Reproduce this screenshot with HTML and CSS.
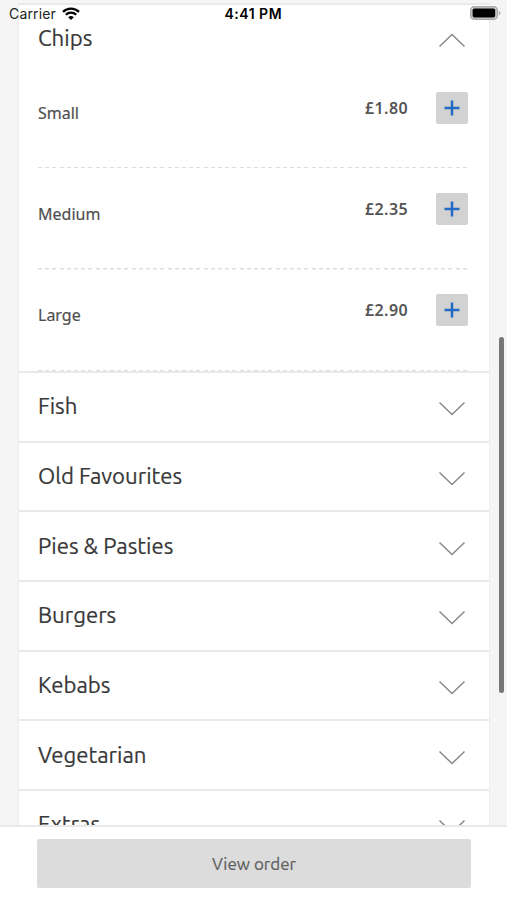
FILE: index.html
```html
<!DOCTYPE html>
<html lang="en">
<head>
<meta charset="utf-8">
<title>Menu</title>
<link rel="stylesheet" href="styles.css">
</head>
<body>
<div class="app">
  <header class="status">
    <span class="carrier">Carrier</span>
    <svg class="wifi" viewBox="0 0 18 13" width="18" height="13" fill="none" stroke="#000" stroke-width="2.3"><path d="M1 4.9a11.4 11.4 0 0 1 16 0"/><path d="M3.8 7.8a7.4 7.4 0 0 1 10.4 0"/><path d="M9 13L6.2 10.3a4 4 0 0 1 5.600 0z" fill="#000" stroke="none"/></svg>
    <span class="time">4:41 PM</span>
    <svg class="battery" viewBox="0 0 31 14" width="31" height="14"><rect x=".7" y=".7" width="26.600" height="12.600" rx="3.600" fill="#ccc" stroke="#aaa" stroke-width="1.400"/><rect x="2.600" y="2.400" width="22.600" height="9.200" rx="1.800"/><path d="M28.800 4.600q3.400 2.400 0 4.800z" fill="#aaa"/></svg>
  </header>
  <main class="content">
    <section class="card">
      <div class="group">
        <div class="heading open"><h2>Chips</h2><svg class="chevron" viewBox="0 0 28 15" width="28" height="15"><path d="M1.500 13.500L14 1.500l12.500 12"/></svg></div>
        <div class="items">
          <div class="item"><span class="name">Small</span><span class="price">£1.80</span><button class="add" aria-label="Add small"><svg viewBox="0 0 16 16" width="16" height="16"><path d="M8 .5v15M.5 8h15"/></svg></button></div>
          <div class="item"><span class="name">Medium</span><span class="price">£2.35</span><button class="add" aria-label="Add medium"><svg viewBox="0 0 16 16" width="16" height="16"><path d="M8 .5v15M.5 8h15"/></svg></button></div>
          <div class="item"><span class="name">Large</span><span class="price">£2.90</span><button class="add" aria-label="Add large"><svg viewBox="0 0 16 16" width="16" height="16"><path d="M8 .5v15M.5 8h15"/></svg></button></div>
        </div>
      </div>
      <div class="heading"><h2>Fish</h2><svg class="chevron" viewBox="0 0 28 15" width="28" height="15"><path d="M1.500 1.500L14 13.500l12.500-12"/></svg></div>
      <div class="heading"><h2>Old Favourites</h2><svg class="chevron" viewBox="0 0 28 15" width="28" height="15"><path d="M1.500 1.500L14 13.500l12.500-12"/></svg></div>
      <div class="heading"><h2>Pies &amp; Pasties</h2><svg class="chevron" viewBox="0 0 28 15" width="28" height="15"><path d="M1.500 1.500L14 13.500l12.500-12"/></svg></div>
      <div class="heading"><h2>Burgers</h2><svg class="chevron" viewBox="0 0 28 15" width="28" height="15"><path d="M1.500 1.500L14 13.500l12.500-12"/></svg></div>
      <div class="heading"><h2>Kebabs</h2><svg class="chevron" viewBox="0 0 28 15" width="28" height="15"><path d="M1.500 1.500L14 13.500l12.500-12"/></svg></div>
      <div class="heading"><h2>Vegetarian</h2><svg class="chevron" viewBox="0 0 28 15" width="28" height="15"><path d="M1.500 1.500L14 13.500l12.500-12"/></svg></div>
      <div class="heading"><h2>Extras</h2><svg class="chevron" viewBox="0 0 28 15" width="28" height="15"><path d="M1.500 1.500L14 13.500l12.500-12"/></svg></div>
    </section>
    <div class="scrollbar"></div>
  </main>
  <footer class="footer"><button class="order">View order</button></footer>
</div>
</body>
</html>
```
FILE: styles.css
```css
* { box-sizing: border-box; }
body { margin: 0; font-family: Ubuntu, "Noto Sans", sans-serif; color: #383838; }
.app { position: relative; width: 507px; height: 900px; display: flex; flex-direction: column; overflow: hidden; background: #f5f5f5; }
.status { position: absolute; z-index: 2; top: 0; left: 0; width: 507px; height: 27px; padding: 0 6px 0 9px; display: grid; grid-template-columns: 47px 110px 1fr 31px; column-gap: 6px; align-items: center; font: 14px/27px Inter, sans-serif; color: #222; }
.carrier { white-space: nowrap; letter-spacing: .15px; }
.wifi { justify-self: start; }
.time { margin-left: 46.500px; font-weight: 600; font-size: 14px; letter-spacing: .5px; color: #000; white-space: nowrap; }
.battery { margin-top: -1px; }
.content { flex: none; height: 825px; padding: 3px 0 0 18px; overflow: hidden; }
.card { width: 472px; border: 1px solid #ededed; border-top: 2px solid #eaeaea; background: #fff; }
.group { height: 366px; }
.heading { height: 69.650px; padding: 0 23px .8px 19px; border-top: 2px solid #e9e9e9; display: flex; align-items: center; justify-content: space-between; }
.heading.open { height: 62px; border: 0; padding-top: 4px; }
h2 { margin: 0; font-size: 22.200px; line-height: 30px; font-weight: 400; white-space: nowrap; -webkit-text-stroke: .2px #383838; }
.chevron { flex: none; margin-top: 5px; fill: none; stroke: #888; stroke-width: 1.500px; }
.items { padding: 0 19px; }
.item { height: 101.300px; padding: 24.500px 2.500px 0 0; display: flex; align-items: flex-start; background: repeating-linear-gradient(90deg, #ddd 0 4px, transparent 4px 7.200px) left bottom / 100% 1.500px no-repeat; }
.item:last-child { height: 102px; }
.name { flex: 1; margin-top: 11px; font: 400 16px/20px "Noto Sans", sans-serif; color: #505050; -webkit-text-stroke: .2px #505050; }
.price { margin-top: 6px; margin-right: 27.500px; font: 600 16px/20px "Noto Sans", sans-serif; color: #555; letter-spacing: .4px; }
.add { width: 32px; height: 32px; padding: 0; border: 0; border-radius: 2px; background: #d2d2d2; display: grid; place-items: center; }
.add path { stroke: #2469c4; stroke-width: 2.500px; }
.items { padding-right: 19px; }
.scrollbar { position: absolute; right: 3px; top: 337px; width: 5px; height: 356px; border-radius: 3px; background: #777; }
.footer { flex: 1; padding: 12px 36px 0 37px; border-top: 2px solid #e9e9e9; background: #fff; }
.order { display: block; width: 434px; height: 49px; border: 0; border-radius: 2px; background: #dcdcdc; font: 17px/49px Ubuntu, "Noto Sans", sans-serif; padding: 0; color: #606060; -webkit-text-stroke: .2px #606060; }
```
